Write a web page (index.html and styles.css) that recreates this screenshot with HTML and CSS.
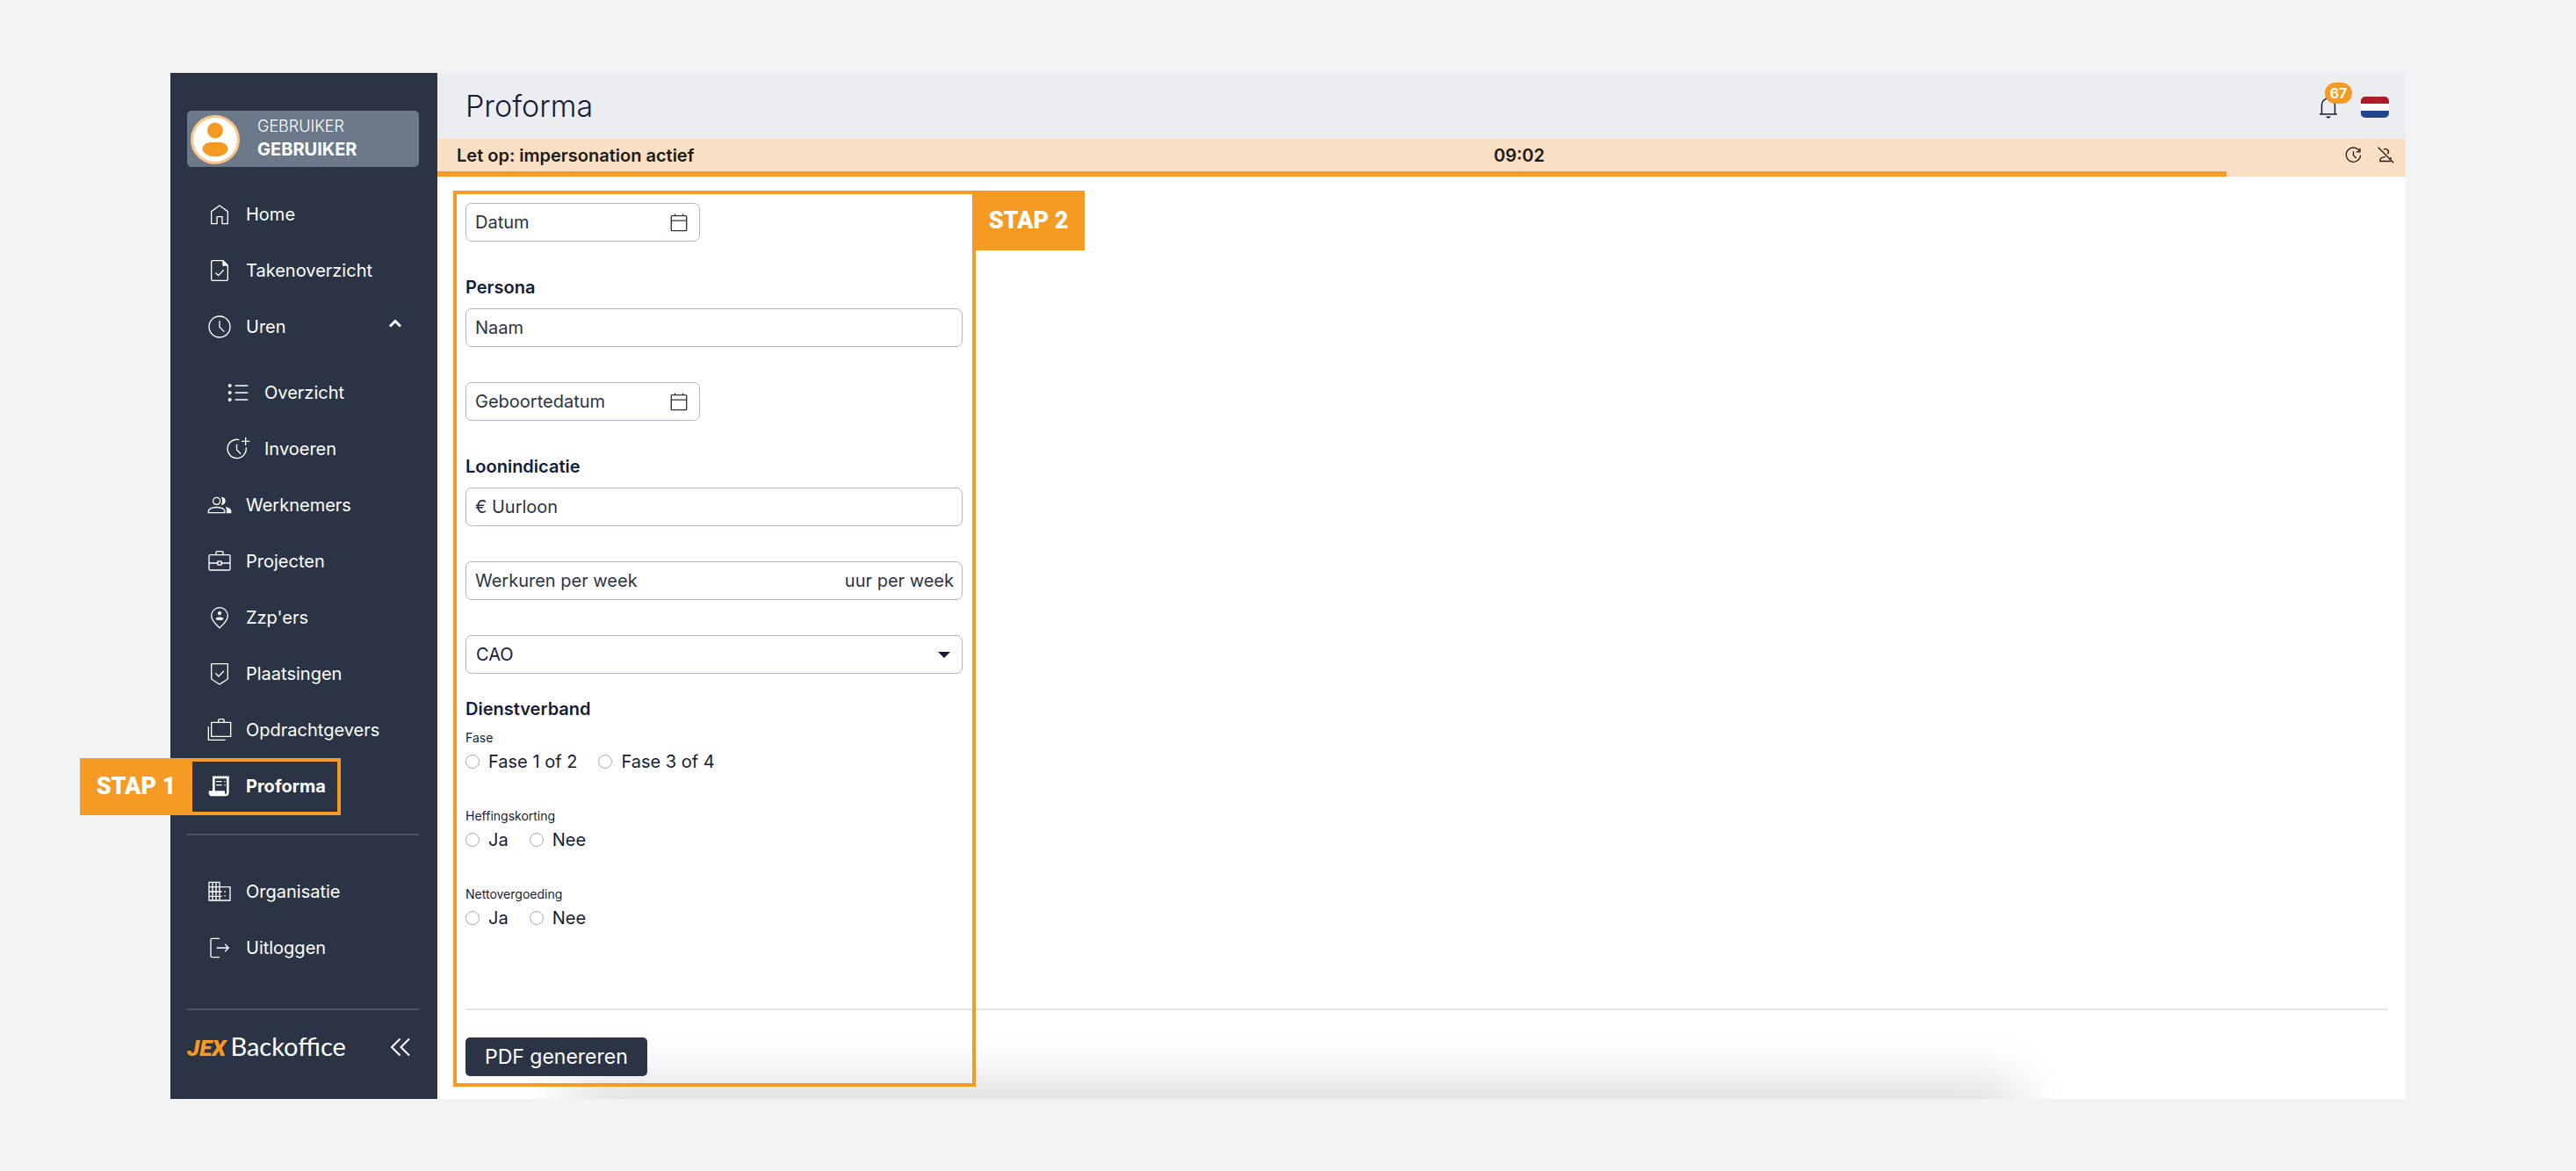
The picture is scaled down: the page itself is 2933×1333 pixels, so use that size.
FILE: index.html
```html
<!DOCTYPE html>
<html lang="nl">

<head>
    <meta charset="UTF-8">
    <meta name="viewport" content="width=device-width, initial-scale=1.0">
    <title>Proforma</title>
    <link rel="stylesheet" href="styles.css">
</head>

<body>
    <div class="app">
        <aside class="sidebar">
            <a class="user" href="#">
                <svg class="avatar" viewBox="0 0 56 56">
                    <circle cx="28" cy="28" r="26.5" fill="#fff" stroke="#f9c684" stroke-width="3" />
                    <circle cx="28" cy="17.500" r="9" fill="#f59a23" />
                    <path d="M23 31h10c5 0 9.500 3 9.500 7.500 0 5-7 8.800-14.500 8.800s-14.500-3.800-14.500-8.800c0-4.500 4.500-7.500 9.500-7.500z" fill="#f59a23" />
                </svg>
                <span class="user-name">GEBRUIKER<strong>GEBRUIKER</strong></span>
            </a>

            <nav>
                <ul class="menu">
                    <li><a href="#">
                        <svg class="icon" viewBox="0 0 24 24"><path d="M5 20V9.500L12 4.500l7 5V20h-4.800v-6H9.800v6z" /></svg>
                        Home</a></li>
                    <li><a href="#">
                        <svg class="icon" viewBox="0 0 24 24"><path d="M15 3.500H6a1 1 0 0 0-1 1v15a1 1 0 0 0 1 1h12a1 1 0 0 0 1-1V7.500zM8.500 13.800l2.500 2.400 4.500-4.700" /><path class="solid" d="M14.500 3.500v4.500H19z" /></svg>
                        Takenoverzicht</a></li>
                    <li><a href="#">
                        <svg class="icon" viewBox="0 0 24 24"><circle cx="12" cy="12" r="9" /><path d="M12 7v5.200l4 4" /></svg>
                        Uren
                        <svg class="caret" viewBox="0 0 16 12"><path d="M2 9.500l6-6 6 6" /></svg></a>
                        <ul class="submenu">
                            <li><a href="#">
                                <svg class="icon" viewBox="0 0 24 24"><path d="M9.500 6h11M9.500 12h11M9.500 18h11" /><g class="solid"><circle cx="5" cy="6" r="1.500" /><circle cx="5" cy="12" r="1.500" /><circle cx="5" cy="18" r="1.500" /></g></svg>
                                Overzicht</a></li>
                            <li><a href="#">
                                <svg class="icon" viewBox="0 0 24 24"><path d="M13 4.200a8 8 0 1 0 5.900 6.600M10.900 8v4.800l3.500 3.500M18.500 2v7M15 5.500h7" /></svg>
                                Invoeren</a></li>
                        </ul>
                    </li>
                    <li><a href="#">
                        <svg class="icon" viewBox="0 0 24 24"><circle cx="9.500" cy="8.500" r="3" /><path d="M2.500 18.500v-1.300c0-2 3.500-3.300 7-3.300s7 1.300 7 3.300v1.300z" /><path class="solid" d="M13.300 5c2.700 0 3.700 2 3.700 3.500S16 12 13.300 12c1.300-2 1.300-5 0-7zM17 13.500c3 .5 5 1.800 5 3.500v2h-4v-2c0-1.500-.2-2.500-1-3.500z" /></svg>
                        Werknemers</a></li>
                    <li><a href="#">
                        <svg class="icon" viewBox="0 0 24 24"><rect x="3" y="6.500" width="18" height="13" rx="1" /><path d="M9 6.500v-2a1 1 0 0 1 1-1h4a1 1 0 0 1 1 1v2M3 13.500h7.500M13.500 13.500H21" /><rect x="10.500" y="12" width="3" height="3" /></svg>
                        Projecten</a></li>
                    <li><a href="#">
                        <svg class="icon" viewBox="0 0 24 24"><path d="M12 20.800c-4.500-4-7-7.200-7-10.300a7 7 0 0 1 14 0c0 3.100-2.500 6.300-7 10.300z" /><g class="solid"><circle cx="12" cy="8.300" r="1.600" /><ellipse cx="12" cy="13" rx="3.200" ry="1.300" /></g></svg>
                        Zzp'ers</a></li>
                    <li><a href="#">
                        <svg class="icon" viewBox="0 0 24 24"><path d="M5 4a.5.5 0 0 1 .5-.5h13a.5.5 0 0 1 .5.500v12.500L12 21l-7-4.500zM8.500 11.500l2.700 2.700 4.500-4.700" /></svg>
                        Plaatsingen</a></li>
                    <li><a href="#">
                        <svg class="icon" viewBox="0 0 24 24"><path d="M5 5.500h16.500v12H5zM11 5.500v-2a.8.8 0 0 1 .8-.8h3.200a.8.8 0 0 1 .8.800v2M2.500 9v11.500H17" /></svg>
                        Opdrachtgevers</a></li>
                    <li class="active"><a href="#">
                        <svg class="icon" viewBox="0 0 24 24"><path class="solid" fill-rule="evenodd" d="M6 3l1 .8L8.200 3l1.100.8 1.200-.8 1.100.8 1.200-.8 1.100.8 1.200-.8 1.100.8 1.200-.8 1.100.8L20 3v14.500a3 3 0 0 1-3 3H5.500a2.700 2.700 0 0 1-2.700-2.700V16H6zM8 5.500V16h8.500v2c0 .7 1.500.7 1.500 0V5.500z" /><path d="M9 8h5M9 11h5M16 8h1M16 11h1" /></svg>
                        Proforma</a>
                        <div class="mark mark-menu"><span class="tag tag-left">STAP 1</span></div>
                    </li>
                </ul>
                <ul class="menu menu-extra">
                    <li><a href="#">
                        <svg class="icon" viewBox="0 0 24 24"><path d="M3 4h9v15.500H3zM12 8h9v11.500h-9M6 4v15.500M9 4v15.500M3 8h9M3 12h11M3 16h11" /><path d="M16 12h1.200M16 15.500h1.200" /></svg>
                        Organisatie</a></li>
                    <li><a href="#">
                        <svg class="icon" viewBox="0 0 24 24"><path d="M12 4H5.500a1 1 0 0 0-1 1v14a1 1 0 0 0 1 1H12M9.500 12h10M16.500 8.800l3.200 3.200-3.200 3.200" /></svg>
                        Uitloggen</a></li>
                </ul>
            </nav>

            <div class="sidebar-footer">
                <a class="logo" href="#"><em>JEX</em>Backoffice</a>
                <button class="collapse" type="button" aria-label="Menu inklappen">
                    <svg viewBox="0 0 24 24"><path d="M11.500 2.500L2 12l9.500 9.500M22 2.500L12.500 12l9.500 9.500" /></svg>
                </button>
            </div>
        </aside>

        <main class="main">
            <header class="header">
                <h1>Proforma</h1>
                <button class="bell" type="button" aria-label="Meldingen">
                    <svg viewBox="0 0 24 28"><path d="M4.500 23V12.500a7.500 7.500 0 0 1 15 0V23M2 23h20" /><path class="clapper" d="M9.500 25.500h5a2.500 2 0 0 1-5 0z" /></svg>
                    <span class="badge">67</span>
                </button>
                <button class="flag" type="button" aria-label="Nederlands"></button>
            </header>

            <div class="banner">
                <span>Let op: impersonation actief</span>
                <span>09:02</span>
                <div class="banner-actions">
                    <button type="button" aria-label="Verlengen">
                        <svg viewBox="0 0 24 24"><path d="M20.200 7.200A9.300 9.300 0 1 0 21.300 12M20.500 3v4.800h-4.800M12 7v5.200l3.800 3.800" /></svg>
                    </button>
                    <button type="button" aria-label="Stoppen">
                        <svg viewBox="0 0 24 24"><path d="M2 2l20 20M9.500 4.800A3.600 3.600 0 1 1 14 10.500M18.500 20H4.500v-1.500c0-2.300 3.500-3.700 7-4M17.500 15.500l1.800 1" /></svg>
                    </button>
                </div>
            </div>
            <div class="progress"><div class="progress-bar" style="width: 90.9%"></div></div>

            <form class="content">
                <div class="fields">
                    <div class="field field-date">
                        <label for="datum">Datum</label>
                        <input type="text" id="datum">
                        <svg viewBox="0 0 24 24"><rect x="2.500" y="4" width="19" height="18.500" rx="1" /><path d="M2.500 10h19M7 4V1.500M17 4V1.500" /></svg>
                    </div>

                    <h2>Persona</h2>
                    <div class="field">
                        <label for="naam">Naam</label>
                        <input type="text" id="naam">
                    </div>
                    <div class="field field-date">
                        <label for="geboortedatum">Geboortedatum</label>
                        <input type="text" id="geboortedatum">
                        <svg viewBox="0 0 24 24"><rect x="2.500" y="4" width="19" height="18.500" rx="1" /><path d="M2.500 10h19M7 4V1.500M17 4V1.500" /></svg>
                    </div>

                    <h2>Loonindicatie</h2>
                    <div class="field">
                        <label for="uurloon">€ Uurloon</label>
                        <input type="text" id="uurloon">
                    </div>
                    <div class="field">
                        <label for="werkuren">Werkuren per week</label>
                        <input type="text" id="werkuren">
                        <span>uur per week</span>
                    </div>
                    <div class="select">
                        <select id="cao" aria-label="CAO">
                            <option>CAO</option>
                        </select>
                    </div>

                    <h2 class="tight">Dienstverband</h2>
                    <fieldset>
                        <legend>Fase</legend>
                        <label><input type="radio" name="fase">Fase 1 of 2</label>
                        <label><input type="radio" name="fase">Fase 3 of 4</label>
                    </fieldset>
                    <fieldset>
                        <legend>Heffingskorting</legend>
                        <label><input type="radio" name="korting">Ja</label>
                        <label><input type="radio" name="korting">Nee</label>
                    </fieldset>
                    <fieldset>
                        <legend>Nettovergoeding</legend>
                        <label><input type="radio" name="vergoeding">Ja</label>
                        <label><input type="radio" name="vergoeding">Nee</label>
                    </fieldset>
                </div>

                <div class="actions">
                    <button class="submit" type="submit">PDF genereren</button>
                </div>
                <div class="mark mark-form"><span class="tag tag-right">STAP 2</span></div>
            </form>
        </main>
    </div>
</body>

</html>
```

FILE: styles.css
```css
* {
    box-sizing: border-box;
}

body {
    margin: 0;
    background: #f3f3f5;
    color: #141d38;
    font: 20px/24px Inter, "Open Sans", sans-serif;
}

ul {
    margin: 0;
    padding: 0;
    list-style: none;
}

a {
    color: inherit;
    text-decoration: none;
}

button {
    padding: 0;
    border: 0;
    background: none;
    color: inherit;
    font: inherit;
    cursor: pointer;
}

svg {
    flex: none;
    fill: none;
    stroke: currentColor;
}

.app {
    display: flex;
    min-height: calc(100vh - 165px);
    margin: 83px 194px 82px;
}

/* sidebar */
.sidebar {
    display: flex;
    flex: none;
    flex-direction: column;
    width: 304px;
    padding: 43px 21px 0 19px;
    background: #2b3445;
    color: #fff;
}

.user {
    display: flex;
    align-items: center;
    gap: 20px;
    height: 64px;
    margin-bottom: 22px;
    padding: 2px 4px 0;
    border-radius: 5px;
    background: #6b798b;
}

.avatar {
    width: 56px;
    height: 56px;
    stroke: none;
}

.user-name {
    padding-bottom: 4px;
    font-size: 18px;
    font-weight: 300;
    line-height: 26px;
}

.user-name strong {
    display: block;
    font-size: 20px;
    font-weight: 700;
}

.menu li {
    position: relative;
}

.menu a {
    display: flex;
    align-items: center;
    gap: 14px;
    height: 64px;
    padding-left: 21px;
}

.submenu {
    padding: 11px 0 0 21px;
}

.active a {
    font-weight: 700;
}

.menu-extra {
    margin-top: 22px;
    padding-top: 32px;
    border-top: 2px solid #4c5563;
}

.icon {
    width: 32px;
    height: 32px;
}

.solid {
    fill: currentColor;
    stroke: none;
}

.caret {
    width: 16px;
    height: 12px;
    margin: 0 19px 8px auto;
    stroke-width: 3;
}

.sidebar-footer {
    display: flex;
    align-items: center;
    justify-content: space-between;
    height: 103px;
    margin-top: auto;
    padding: 0 8px 18px 0;
    border-top: 2px solid #4c5563;
}

.logo {
    font: 29px/32px Lato, sans-serif;
}

.logo em {
    margin-right: 5px;
    color: #f59a23;
    font: italic 900 26px Roboto, sans-serif;
}

.collapse svg {
    display: block;
    width: 26px;
    height: 24px;
    stroke-width: 2;
}

/* main */
.main {
    display: flex;
    flex: 1;
    flex-direction: column;
    min-width: 0;
    background: #fff;
}

.header {
    display: flex;
    align-items: center;
    gap: 25px;
    height: 75px;
    padding: 0 19px 0 32px;
    background: #ecedf1;
}

.header h1 {
    margin: 0 auto 0 0;
    font-size: 34px;
    font-weight: 300;
    line-height: 40px;
}

.bell {
    position: relative;
}

.bell svg {
    display: block;
    width: 24px;
    height: 28px;
    stroke-width: 1.5;
}

.bell .clapper {
    fill: currentColor;
    stroke: none;
}

.badge {
    position: absolute;
    top: -13px;
    left: 8px;
    width: 31px;
    border-radius: 12px;
    background: #f59a23;
    color: #fff;
    font-size: 16px;
    font-weight: 700;
}

.flag {
    width: 32px;
    height: 24px;
    margin-top: 2px;
    border-radius: 5px;
    background: linear-gradient(#ae1c28 33%, #fff 33% 66%, #21468b 66%);
}

.banner {
    display: flex;
    align-items: center;
    justify-content: space-between;
    height: 37px;
    padding: 0 12px 0 22px;
    background: #f9e0c5;
    color: #1c1b14;
    font-size: 20px;
    font-weight: 600;
}

.banner-actions {
    display: flex;
    gap: 16px;
}

.banner-actions svg {
    display: block;
    width: 21px;
    height: 21px;
    stroke-width: 1.5;
}

.progress {
    height: 6px;
    background: #f9e0c5;
}

.progress-bar {
    height: 6px;
    background: #f59a23;
}

/* form */
.content {
    position: relative;
    display: flex;
    flex: 1;
    flex-direction: column;
    padding: 30px 20px 26px 32px;
    overflow: hidden;
}

/* shadow coming up from the bottom edge */
.content::before {
    position: absolute;
    right: 460px;
    bottom: -60px;
    left: 170px;
    height: 60px;
    content: "";
    box-shadow: 0 0 60px 20px rgba(0, 0, 0, .14);
}

.fields {
    display: flex;
    flex-direction: column;
    max-width: 566px;
    gap: 40px;
}

.fields h2 {
    margin: 0 0 -28px;
    font-size: 20px;
    font-weight: 600;
    line-height: 24px;
}

.fields .tight {
    margin: -12px 0 -29px;
}

.field {
    display: flex;
    align-items: center;
    gap: 12px;
    height: 44px;
    padding: 0 9px 0 10px;
    border: 1px solid #b0b7c4;
    border-radius: 7px;
    color: #2b3445;
}

.field-date {
    width: 267px;
    padding-right: 12px;
}

.field input {
    flex: 1;
    min-width: 0;
    padding: 0;
    border: 0;
    outline: 0;
    background: none;
    font: inherit;
}

.field svg {
    width: 22px;
    height: 24px;
    stroke-width: 1.5;
}

.select {
    position: relative;
}

.select::after {
    position: absolute;
    top: 19px;
    right: 14px;
    border: 7px solid transparent;
    border-top-color: #141d38;
    border-bottom: 0;
    content: "";
    pointer-events: none;
}

.select select {
    display: block;
    width: 100%;
    height: 44px;
    padding: 0 11px;
    border: 1px solid #b0b7c4;
    border-radius: 7px;
    appearance: none;
    background: none;
    color: inherit;
    font: inherit;
}

fieldset {
    display: flex;
    gap: 24px;
    margin: 0;
    padding: 0;
    border: 0;
}

legend {
    margin-bottom: 5px;
    padding: 0;
    font-size: 14px;
    line-height: 20px;
}

fieldset label {
    display: flex;
    align-items: center;
    gap: 10px;
}

fieldset input {
    width: 16px;
    height: 16px;
    margin: 0;
    border: 1px solid #a5adbc;
    border-radius: 50%;
    appearance: none;
}

fieldset input:checked {
    background: #2b3445;
}

.actions {
    margin-top: auto;
    padding-top: 31px;
    border-top: 2px solid #e0e5e9;
}

.submit {
    position: relative;
    display: block;
    height: 44px;
    padding: 0 22px;
    border-radius: 5px;
    background: #2b3445;
    color: #fff;
    font-size: 23px;
}

/* step markers over the page */
.mark {
    position: absolute;
    border: 4px solid #f59a23;
    pointer-events: none;
}

.mark-menu {
    top: 0;
    left: 2px;
    width: 173px;
    height: 65px;
}

.mark-form {
    top: 16px;
    bottom: 14px;
    left: 18px;
    width: 595px;
}

.tag {
    position: absolute;
    top: -4px;
    width: 128px;
    background: #f59a23;
    color: #fff;
    font: 900 27px/65px Roboto, sans-serif;
    text-align: center;
}

.tag-left {
    right: 100%;
}

.tag-right {
    left: 100%;
    line-height: 68px;
}
```
